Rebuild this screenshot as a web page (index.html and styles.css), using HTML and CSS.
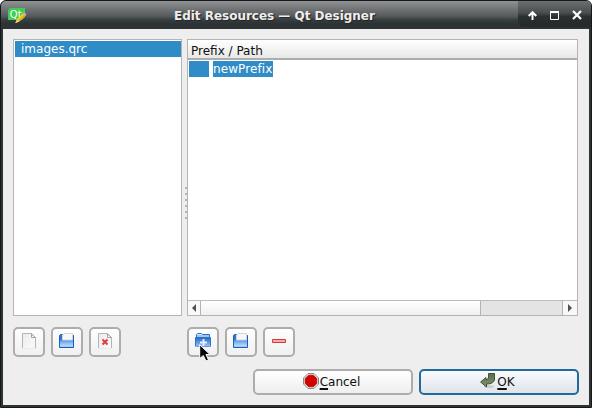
FILE: index.html
```html
<!DOCTYPE html>
<html lang="en">
<head>
<meta charset="utf-8">
<title>Edit Resources — Qt Designer</title>
<link rel="stylesheet" href="styles.css">
</head>
<body>
<svg class="defs" width="0" height="0">
  <defs>
    <linearGradient id="blue" x1="0" y1="0" x2="0" y2="1"><stop offset="0" stop-color="#4a8de6"/><stop offset=".35" stop-color="#82b2f2"/><stop offset="1" stop-color="#c9e1fc"/></linearGradient>
    <linearGradient id="folder" x1="0" y1="0" x2="0" y2="1"><stop offset="0" stop-color="#1c66c6"/><stop offset="1" stop-color="#9cc6f8"/></linearGradient>
    <linearGradient id="paper" x1="0" y1="0" x2="1" y2="1"><stop offset="0" stop-color="#ececec"/><stop offset="1" stop-color="#fafafa"/></linearGradient>
    <linearGradient id="green" x1="0" y1="0" x2="0" y2="1"><stop offset="0" stop-color="#5a6e4c"/><stop offset="1" stop-color="#80956c"/></linearGradient>
    <symbol id="page" viewBox="0 0 16 16">
      <path d="M1.5 15V.5H10.5L14.5 4.5V15" fill="url(#paper)" stroke="#b4b4b4"/>
      <path d="M10.5 1V4.5H14.5Z" fill="#fff" stroke="#a2a2a2"/>
      <path d="M1 15.5H15" stroke="#e9e9e9"/>
    </symbol>
    <symbol id="drawer" viewBox="0 0 16 16">
      <path d="M.5 2.5L1.5 1.5H13.5L14.5 2.5V14.5H.5Z" fill="#2e77d4" stroke="#1760c0"/>
      <path d="M1 7H14V13.8H1Z" fill="url(#blue)"/>
      <path d="M3.5 7V2L5 .5H13.5V7Z" fill="#f8f8f8" stroke="#d3d6da"/>
    </symbol>
  </defs>
</svg>
<div class="window">
  <header class="titlebar">
    <svg class="app-icon" width="20" height="18" viewBox="0 0 20 18">
      <path d="M3 1H18V10L15 13H1V3Z" fill="#41cd52"/>
      <text x="2.8" y="10.5" class="qt">Qt</text>
      <path d="M8.5 16L10 12.3L16 6.2L18.6 8.5L12.4 14.4Z" fill="#f9cf18"/>
      <path d="M12.4 14.4L18.6 8.5L17.6 7.6L11.4 13.6Z" fill="#e4a40e"/>
      <path d="M15.5 6.7L17 5.1L19.5 7.5L18 9Z" fill="#bfb2ae"/>
      <path d="M8.2 16.3L9.8 12.5L12.2 14.5Z" fill="#d9c9a5"/>
    </svg>
    <h1 class="title">Edit Resources — Qt Designer</h1>
    <div class="controls">
      <svg width="9" height="9" viewBox="0 0 9 9"><path d="M4.5 9V2M.7 5L4.5 1.2L8.3 5" fill="none" stroke="#fff" stroke-width="2"/></svg>
      <svg width="9" height="9" viewBox="0 0 9 9"><path d="M.5 1H8.5V8.5H.5Z" fill="none" stroke="#fff"/><path d="M0 1H9" stroke="#fff" stroke-width="2"/></svg>
      <svg width="10" height="10" viewBox="0 0 10 10"><path d="M1 1L9 9M9 1L1 9" stroke="#fff" stroke-width="2.2"/></svg>
    </div>
  </header>
  <main class="content">
    <div class="panes">
      <div class="list"><div class="item">images.qrc</div></div>
      <div class="handle"><i></i><i></i><i></i><i></i><i></i><i></i></div>
      <div class="tree">
        <div class="tree-head">Prefix / Path</div>
        <div class="tree-body">
          <div class="tree-row"><span class="branch"></span><span class="edit">newPrefix</span></div>
        </div>
        <div class="scrollbar">
          <span class="arrow"><svg width="4" height="8" viewBox="0 0 4 8"><path d="M4 0V8L0 4Z" fill="#505050"/></svg></span>
          <span class="thumb"></span>
          <span class="track"></span>
          <span class="arrow right"><svg width="4" height="8" viewBox="0 0 4 8"><path d="M0 0V8L4 4Z" fill="#505050"/></svg></span>
        </div>
      </div>
    </div>
    <div class="tools">
      <div class="group files">
        <button class="tool"><svg width="16" height="16"><use href="#page"/></svg></button>
        <button class="tool"><svg width="16" height="16"><use href="#drawer"/></svg></button>
        <button class="tool"><svg width="16" height="16"><use href="#page"/><path d="M5.5 6.5L10.5 11.5M10.5 6.5L5.5 11.5" stroke="#e83a3a" stroke-width="2"/></svg></button>
      </div>
      <div class="group">
        <button class="tool">
          <svg width="16" height="16"><path d="M1.5 13.5V1.5L2.5 .5H6.5L7.5 1.5H14.5V13.5Z" fill="#d5e6fb" stroke="#2a70c8"/><path d="M.5 4.5H15.5V13.5H.5Z" fill="url(#folder)"/><path d="M.5 13.5V4.5H15.5V13.5" fill="none" stroke="#2a70cc"/><path d="M2 3H14" stroke="#6ba2e6"/><path d="M8.5 6V13M5 9.5H12" stroke="#e4effc" stroke-width="2"/></svg>
          <svg class="cursor" width="13" height="19" viewBox="0 0 13 19"><path d="M.7 .7V14.5L4.3 11.5L7 17L9.5 16L7 10.5H11Z" fill="#080808" stroke="#fff" stroke-width="1"/></svg>
        </button>
        <button class="tool"><svg width="16" height="16"><use href="#drawer"/></svg></button>
        <button class="tool"><svg width="16" height="16"><path d="M1.5 6.5H14.5V9.5H1.5Z" fill="#f5aaaa" stroke="#d43a3a"/></svg></button>
      </div>
    </div>
    <div class="actions">
      <button class="action">
        <svg width="16" height="16" viewBox="0 0 16 16"><path d="M5 .5H11L15.5 5V11L11 15.5H5L.5 11V5Z" fill="#e9e9e3" stroke="#888a85"/><path d="M5.6 2.2H10.4L13.8 5.6V10.4L10.4 13.8H5.6L2.2 10.4V5.6Z" fill="#d40000" stroke="#a80000" stroke-width=".7"/></svg>
        <span><span class="key">C</span>ancel</span>
      </button>
      <button class="action primary">
        <svg width="16" height="16" viewBox="0 0 16 16"><ellipse cx="9" cy="13.6" rx="5" ry="1.3" fill="#c8cbc6"/><path d="M8.5 .5H14.5V6C14.5 9.5 11 11 6.5 11V14L.6 9L6 4.5V6.5C8 6.5 8.5 5.5 8.5 4Z" fill="url(#green)" stroke="#445038"/></svg>
        <span><span class="key">O</span>K</span>
      </button>
    </div>
  </main>
</div>
</body>
</html>
```

FILE: styles.css
```css
* { box-sizing: border-box; }
body {
  margin: 0;
  font: 12px "DejaVu Sans", sans-serif;
  color: #101010;
  background: #fff;
}
.defs { position: absolute; }
button { font: inherit; color: inherit; padding: 0; }
svg { display: block; flex: none; }
.window {
  width: 592px;
  height: 408px;
  display: flex;
  flex-direction: column;
  border: 1px solid #16191b;
  border-radius: 6px 6px 0 0;
  background: #2e3436;
  overflow: hidden;
}
.titlebar {
  height: 28px;
  flex: none;
  display: flex;
  align-items: center;
  background: linear-gradient(#909294, #7a7d7e 20%, #55595b 55%, #3a4042 66%, #2e3436 80%);
}
.app-icon { margin-left: 6px; margin-top: 2px; }
.qt { font: 10px "DejaVu Sans", sans-serif; fill: #fff; }
.title {
  flex: 1;
  margin: 0 0 0 147px;
  padding-top: 1px;
  font-size: 12px;
  line-height: 28px;
  font-weight: bold;
  letter-spacing: -0.02px;
  color: #eee;
  white-space: nowrap;
  text-shadow: 1px 1px 1px #222;
}
.controls {
  width: 73px;
  height: 26px;
  align-self: flex-start;
  display: flex;
  align-items: center;
  justify-content: space-between;
  padding: 2px 9px 0 10px;
  border-radius: 0 0 0 6px;
  background: linear-gradient(#6c6f70, #4a4e50 45%, #2a2f31 60%, #25292b);
}
.content {
  flex: 1;
  margin: 0 2px 2px;
  padding: 10px 10px 0;
  background: #eee;
}
.panes { display: flex; height: 277px; }
.list {
  width: 169px;
  border: 1px solid #b4b4b4;
  background: #fff;
  padding: 1px 0 0 1px;
}
.item {
  height: 16px;
  line-height: 17px;
  padding-left: 6px;
  background: #308cc6;
  color: #fff;
}
.handle {
  width: 5px;
  display: flex;
  flex-direction: column;
  align-items: flex-end;
  justify-content: center;
  gap: 4px;
  padding-top: 51px;
}
.handle i { width: 2px; height: 2px; background: #b5b5b5; }
.tree {
  width: 391px;
  display: flex;
  flex-direction: column;
  border: 1px solid #b4b4b4;
  background: #fff;
}
.tree-head {
  height: 20px;
  line-height: 22px;
  padding-left: 3px;
  border-bottom: 2px solid #adadad;
  background: linear-gradient(#fff, #e8e8e8);
}
.tree-body { flex: 1; padding: 1px 0 0 1px; }
.tree-row { display: flex; gap: 4px; height: 16px; line-height: 16px; }
.branch { width: 20px; background: #308cc6; }
.edit { width: 60px; background: #308cc6; color: #fff; letter-spacing: 0.1px; }
.scrollbar {
  height: 15px;
  display: flex;
  border-top: 1px solid #bcbcbc;
}
.arrow {
  width: 13px;
  display: flex;
  align-items: center;
  justify-content: center;
  border-right: 1px solid #b4b4b4;
  background: #f8f8f8;
}
.arrow.right { width: 15px; border-right: 0; border-left: 1px solid #b4b4b4; }
.thumb { width: 280px; border-right: 1px solid #b4b4b4; background: linear-gradient(#fff, #f0f0f0); }
.track { flex: 1; background: #e4e4e4; }
.tools { display: flex; gap: 66px; margin-top: 11px; }
.group { display: flex; gap: 6px; }
.tool {
  position: relative;
  width: 32px;
  height: 30px;
  display: flex;
  justify-content: center;
  padding-top: 4px;
  border: 2px solid #adadad;
  border-radius: 5px;
  background: linear-gradient(#fefefe, #f0f0f0);
}
.cursor { position: absolute; left: 10px; top: 15px; }
.actions { display: flex; justify-content: flex-end; gap: 6px; margin: 12px 0 0; }
.action {
  width: 160px;
  height: 26px;
  display: flex;
  align-items: center;
  justify-content: center;
  gap: 1px;
  padding-right: 3px;
  border: 2px solid #adadad;
  border-radius: 5px;
  background: linear-gradient(#fefefe, #efefef);
}
.action svg { margin-top: -3px; }
.action.primary { border-color: #216b9c; background: linear-gradient(#fafbfd, #dfe4ea); }
.key { text-decoration: underline 2px; text-underline-offset: 2px; text-decoration-skip-ink: none; }
```
